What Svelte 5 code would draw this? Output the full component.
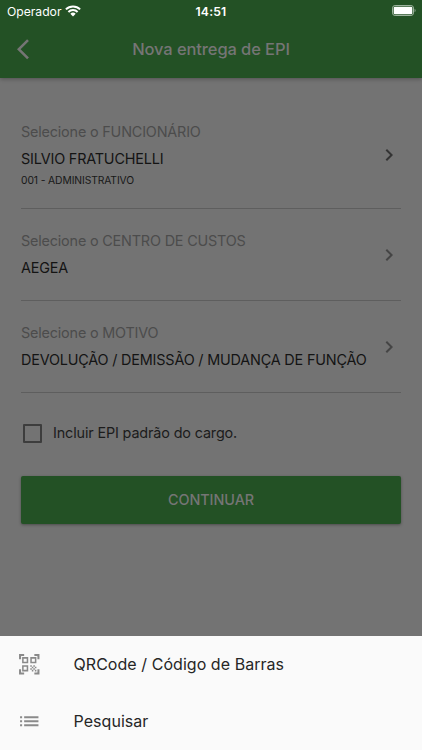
<script>
    const CHEVRON = "M10 6L8.59 7.41 13.17 12l-4.58 4.59L10 18l6-6z";
    const LIST = "M3 13h2v-2H3v2zm0 4h2v-2H3v2zm0-8h2V7H3v2zm4 4h14v-2H7v2zm0 4h14v-2H7v2zM7 7v2h14V7H7z";
    const QRCODE =
        "M9.5 6.5v3h-3v-3h3M11 5H5v6h6V5zm-1.5 9.5v3h-3v-3h3M11 13H5v6h6v-6zm6.5-6.5v3h-3v-3h3M19 5h-6v6h6V5z" +
        "m-6 8h1.5v1.5H13V13zm1.5 1.5H16V16h-1.5v-1.5zM16 13h1.5v1.5H16V13zm-3 3h1.5v1.5H13V16zm1.5 1.5H16V19h-1.5v-1.5z" +
        "M16 16h1.5v1.5H16V16zm1.5-1.5H19V16h-1.5v-1.5zm0 3H19V19h-1.5v-1.5z" +
        "M22 7h-2V4h-3V2h5v5zm0 15v-5h-2v3h-3v2h5zM2 22h5v-2H4v-3H2v5zM2 2v5h2V4h3V2H2z";

    let fields = [
        { name: "funcionario", label: "Selecione o FUNCIONÁRIO", value: "SILVIO FRATUCHELLI", detail: "001 - ADMINISTRATIVO" },
        { name: "centro", label: "Selecione o CENTRO DE CUSTOS", value: "AEGEA" },
        { name: "motivo", label: "Selecione o MOTIVO", value: "DEVOLUÇÃO / DEMISSÃO / MUDANÇA DE FUNÇÃO" },
    ];

    let options = [
        { name: "qrcode", text: "QRCode / Código de Barras", icon: QRCODE },
        { name: "pesquisar", text: "Pesquisar", icon: LIST },
    ];

    let includeDefault = false;
</script>

<div class="screen">
    <header>
        <div class="status">
            <div class="carrier">
                <span>Operador</span>
                <svg width="16" height="12" viewBox="0 0 16 12">
                    <path d="M0.9 4.4a10 10 0 0 1 14.2 0" />
                    <path d="M3.4 7a6.5 6.5 0 0 1 9.2 0" />
                    <path class="dot" d="M8 11.5L5.3 8.8a3.8 3.8 0 0 1 5.4 0z" />
                </svg>
            </div>
            <span class="time">14:51</span>
            <svg class="battery" width="24" height="11" viewBox="0 0 24 11">
                <rect class="case" x="0.5" y="0.5" width="21" height="10" rx="2.6" />
                <rect class="level" x="1.7" y="1.7" width="18.6" height="7.6" rx="1.4" />
                <path class="tip" d="M22.6 3.8c1.3.5 1.3 2.9 0 3.4z" />
            </svg>
        </div>
        <div class="toolbar">
            <button class="back" aria-label="Voltar">
                <svg width="24.5" height="24.5" viewBox="0 0 24 24">
                    <path d="M11.67 3.87L9.9 2.1 0 12l9.9 9.9 1.77-1.77L3.54 12z" />
                </svg>
            </button>
            <h1>Nova entrega de EPI</h1>
        </div>
    </header>

    <main>
        {#each fields as field}
            <div class="field {field.name}">
                <div class="texts">
                    <span class="label">{field.label}</span>
                    <span class="value">{field.value}</span>
                    {#if field.detail}
                        <span class="detail">{field.detail}</span>
                    {/if}
                </div>
                <svg width="24" height="24" viewBox="0 0 24 24"><path d={CHEVRON} /></svg>
            </div>
        {/each}

        <label class="check">
            <input type="checkbox" bind:checked={includeDefault} />
            <span>Incluir EPI padrão do cargo.</span>
        </label>

        <button class="continue">CONTINUAR</button>
    </main>

    <!-- bottom sheet -->
    <div class="sheet">
        {#each options as option}
            <button class="option {option.name}">
                <svg width="24.5" height="24.5" viewBox="0 0 24 24"><path d={option.icon} /></svg>
                <span>{option.text}</span>
            </button>
        {/each}
    </div>
</div>

<style>
    :global(body) {
        background-color: #737373;
    }

    .screen {
        display: flex;
        flex-direction: column;
        height: 750px;
        overflow: hidden;
        font-family: Inter, "Liberation Sans", sans-serif;
        background-color: #737373;
    }

    button {
        border: none;
        padding: 0;
        background: none;
        font-family: inherit;
    }

    svg {
        display: block;
        flex: none;
    }

    header {
        height: 78px;
        flex: none;
        background-color: #235125;
        box-shadow: 0 1px 4px rgba(0, 0, 0, 0.3);
    }

    .status {
        display: grid;
        grid-template-columns: 1fr auto 1fr;
        align-items: center;
        height: 21px;
        padding: 0 7px;
        color: #fff;
        font-size: 12.2px;
    }

    .carrier {
        display: flex;
        align-items: center;
        gap: 4px;
        letter-spacing: -0.03px;
    }

    .carrier span,
    .time {
        padding-top: 1px;
    }

    .carrier path {
        fill: none;
        stroke: #fff;
        stroke-width: 2;
    }

    .carrier .dot {
        fill: #fff;
        stroke: none;
    }

    .time {
        font-weight: 600;
        letter-spacing: 0.2px;
    }

    .battery {
        justify-self: end;
        margin-right: -1px;
    }

    .case {
        fill: none;
        stroke: #9db39e;
    }

    .level {
        fill: #fff;
    }

    .tip {
        fill: #9db39e;
    }

    .toolbar {
        display: grid;
        grid-template-columns: 40px 1fr 40px;
        align-items: center;
        height: 57px;
        padding: 0 17px;
    }

    .back {
        width: 25px;
    }

    .back path {
        fill: #757575;
    }

    h1 {
        margin: -1px 0 0;
        text-align: center;
        font-size: 16.5px;
        font-weight: 500;
        letter-spacing: -0.1px;
        color: #757575;
    }

    main {
        flex: 1;
        padding: 24px 21px 0;
    }

    .field {
        display: flex;
        justify-content: space-between;
        align-items: center;
        box-sizing: border-box;
        height: 92px;
        border-bottom: 1px solid #5e5e5e;
    }

    .funcionario {
        height: 107px;
    }

    .texts {
        display: flex;
        flex-direction: column;
        align-self: flex-start;
        padding-top: 22px;
        white-space: nowrap;
    }

    .funcionario .texts {
        padding-top: 20px;
    }

    .label,
    .value {
        height: 27px;
        line-height: 20px;
        font-size: 14.4px;
        letter-spacing: -0.18px;
    }

    .label {
        color: #4c4c4c;
    }

    .value {
        color: #141414;
    }

    .detail {
        margin-top: -4px;
        line-height: 16px;
        font-size: 10.3px;
        letter-spacing: -0.1px;
        color: #181818;
    }

    .field svg {
        fill: #454545;
    }

    .funcionario svg {
        fill: #343434;
    }

    .check {
        display: flex;
        align-items: center;
        height: 20px;
        margin-top: 30px;
        padding-left: 2px;
        gap: 11px;
        font-size: 14.4px;
        letter-spacing: -0.14px;
        color: #1c1c1c;
    }

    .check span {
        padding-bottom: 1px;
    }

    .check input {
        appearance: none;
        box-sizing: border-box;
        width: 19px;
        height: 19px;
        margin: 0;
        border: 2px solid #3d3d3d;
        border-radius: 1px;
    }

    .continue {
        display: block;
        width: 100%;
        height: 48px;
        margin-top: 33px;
        padding-bottom: 1px;
        border-radius: 2px;
        background-color: #235125;
        box-shadow: 0 1px 3px rgba(0, 0, 0, 0.35);
        font-size: 14.4px;
        font-weight: 500;
        letter-spacing: -0.05px;
        color: #757575;
    }

    .sheet {
        flex: none;
        height: 114px;
        background-color: #fafafa;
    }

    .option {
        display: flex;
        align-items: center;
        width: 100%;
        height: 57px;
        padding-left: 16.5px;
        gap: 32.5px;
        font-size: 16px;
        letter-spacing: 0.05px;
        color: #262626;
    }

    .option span {
        padding-bottom: 1px;
    }

    .option svg {
        fill: #8a8a8a;
    }
</style>
